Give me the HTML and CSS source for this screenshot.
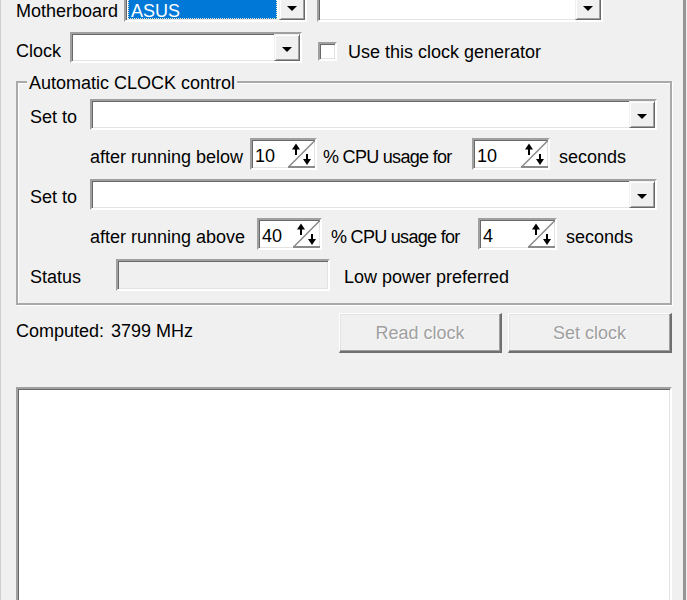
FILE: index.html
```html
<!DOCTYPE html>
<html>
<head>
<meta charset="utf-8">
<title>Clock</title>
<link rel="stylesheet" href="styles.css">
</head>
<body>
<div class="window">
  <div class="row row-mb">
    <span class="lbl lbl-mb">Motherboard</span>
    <div class="combo sunken combo-mb">
      <div class="combo-field field-sel"><span class="sel">ASUS</span></div>
      <div class="drop"><span class="tri"></span></div>
    </div>
    <div class="combo sunken combo-mb2">
      <div class="combo-field"></div>
      <div class="drop"><span class="tri"></span></div>
    </div>
  </div>

  <div class="row row-clock">
    <span class="lbl lbl-clock">Clock</span>
    <div class="combo sunken combo-clock">
      <div class="combo-field"></div>
      <div class="drop"><span class="tri"></span></div>
    </div>
    <span class="check sunken"></span>
    <span class="lbl lbl-check">Use this clock generator</span>
  </div>

  <div class="group">
    <div class="legend">Automatic CLOCK control</div>

    <div class="row row-set1">
      <span class="lbl lbl-set">Set to</span>
      <div class="combo sunken combo-set">
        <div class="combo-field"></div>
        <div class="drop"><span class="tri"></span></div>
      </div>
    </div>

    <div class="row row-spin1">
      <span class="lbl lbl-t lbl-below">after running below</span>
      <div class="edit sunken edit-a1">
        <span class="val">10</span>
        <svg class="spin" viewBox="0 0 27 28" width="27" height="28"><path d="M0 27.5 L27 0.5" stroke="#8a8a8a" stroke-width="1.5" fill="none"/><path d="M0 27 H27" stroke="#8a8a8a" stroke-width="2"/><path d="M8 7 V15" stroke="#000" stroke-width="2"/><path d="M4 9.5 L8 3.5 L12 9.5 Z" fill="#000"/><path d="M19 14 V21" stroke="#000" stroke-width="2"/><path d="M15 19 L19 25 L23 19 Z" fill="#000"/></svg>
      </div>
      <span class="lbl lbl-t lbl-cpu lbl-cpu1">% CPU usage for</span>
      <div class="edit sunken edit-b1">
        <span class="val">10</span>
        <svg class="spin" viewBox="0 0 27 28" width="27" height="28"><path d="M0 27.5 L27 0.5" stroke="#8a8a8a" stroke-width="1.5" fill="none"/><path d="M0 27 H27" stroke="#8a8a8a" stroke-width="2"/><path d="M8 7 V15" stroke="#000" stroke-width="2"/><path d="M4 9.5 L8 3.5 L12 9.5 Z" fill="#000"/><path d="M19 14 V21" stroke="#000" stroke-width="2"/><path d="M15 19 L19 25 L23 19 Z" fill="#000"/></svg>
      </div>
      <span class="lbl lbl-t lbl-sec">seconds</span>
    </div>

    <div class="row row-set2">
      <span class="lbl lbl-set">Set to</span>
      <div class="combo sunken combo-set">
        <div class="combo-field"></div>
        <div class="drop"><span class="tri"></span></div>
      </div>
    </div>

    <div class="row row-spin2">
      <span class="lbl lbl-t lbl-above">after running above</span>
      <div class="edit sunken edit-a2">
        <span class="val">40</span>
        <svg class="spin" viewBox="0 0 27 28" width="27" height="28"><path d="M0 27.5 L27 0.5" stroke="#8a8a8a" stroke-width="1.5" fill="none"/><path d="M0 27 H27" stroke="#8a8a8a" stroke-width="2"/><path d="M8 7 V15" stroke="#000" stroke-width="2"/><path d="M4 9.5 L8 3.5 L12 9.5 Z" fill="#000"/><path d="M19 14 V21" stroke="#000" stroke-width="2"/><path d="M15 19 L19 25 L23 19 Z" fill="#000"/></svg>
      </div>
      <span class="lbl lbl-t lbl-cpu lbl-cpu2">% CPU usage for</span>
      <div class="edit sunken edit-b2">
        <span class="val">4</span>
        <svg class="spin" viewBox="0 0 27 28" width="27" height="28"><path d="M0 27.5 L27 0.5" stroke="#8a8a8a" stroke-width="1.5" fill="none"/><path d="M0 27 H27" stroke="#8a8a8a" stroke-width="2"/><path d="M8 7 V15" stroke="#000" stroke-width="2"/><path d="M4 9.5 L8 3.5 L12 9.5 Z" fill="#000"/><path d="M19 14 V21" stroke="#000" stroke-width="2"/><path d="M15 19 L19 25 L23 19 Z" fill="#000"/></svg>
      </div>
      <span class="lbl lbl-t lbl-sec">seconds</span>
    </div>

    <div class="row row-status">
      <span class="lbl lbl-status">Status</span>
      <div class="status-box sunken"></div>
      <span class="lbl lbl-pref">Low power preferred</span>
    </div>
  </div>

  <div class="row row-bottom">
    <span class="lbl lbl-computed">Computed:<span class="mhz">3799 MHz</span></span>
    <button class="btn btn-read" disabled>Read clock</button>
    <button class="btn btn-set" disabled>Set clock</button>
  </div>

  <div class="log sunken"></div>
</div>
</body>
</html>
```

FILE: styles.css
```css
html, body {
  margin: 0;
  padding: 0;
  background: #f0f0f0;
  overflow: hidden;
}

body {
  font-family: "Liberation Sans", Arial, sans-serif;
  font-size: 18px;
  line-height: 20px;
  color: #000;
}

.window {
  width: 686px;
  height: 600px;
  box-sizing: border-box;
  border-left: 1px solid #cfcfcf;
  border-right: 3px solid #959595;
  padding: 0 11px 0 15px;
  display: flex;
  flex-direction: column;
  overflow: hidden;
}

.row {
  display: flex;
  align-items: flex-start;
  flex-shrink: 0;
}

.lbl {
  line-height: 20px;
  white-space: nowrap;
  flex-shrink: 0;
}

/* 3D sunken edge */
.sunken {
  box-sizing: border-box;
  border: 2px solid;
  border-color: #a0a0a0 #ffffff #ffffff #a0a0a0;
  box-shadow: inset 1px 1px 0 #696969, inset -1px -1px 0 #e3e3e3;
}

/* Combo boxes */
.combo {
  display: flex;
  height: 31px;
  background: #fff;
  flex-shrink: 0;
}

.combo-field {
  flex: 1;
  display: flex;
}

.drop {
  width: 26px;
  box-sizing: border-box;
  background: #f0f0f0;
  border: 1px solid;
  border-color: #f0f0f0 #696969 #696969 #f0f0f0;
  box-shadow: inset 1px 1px 0 #fff, inset -1px -1px 0 #a0a0a0;
  display: flex;
  align-items: center;
  justify-content: center;
}

.tri {
  width: 0;
  height: 0;
  margin-top: 3px;
  border-left: 5px solid transparent;
  border-right: 5px solid transparent;
  border-top: 5px solid #000;
}

/* Row: Motherboard */
.row-mb {
  margin-top: -9px;
}

.lbl-mb {
  width: 108px;
  margin-top: 10px;
}

.combo-mb {
  width: 183px;
}

.field-sel {
  padding: 1px 2px 1px 2px;
}

.sel {
  flex: 1;
  display: block;
  background: #0078d7;
  color: #fff;
  padding: 7px 0 0 3px;
  outline: 1px dotted #e8e8c8;
  outline-offset: -1px;
}

.combo-mb2 {
  width: 286px;
  margin-left: 10px;
}

/* Row: Clock */
.row-clock {
  margin-top: 10px;
}

.lbl-clock {
  width: 54px;
  margin-top: 9px;
}

.combo-clock {
  width: 232px;
}

.check {
  width: 19px;
  height: 19px;
  background: #fff;
  margin: 10px 0 0 16px;
  flex-shrink: 0;
}

.lbl-check {
  margin: 10px 0 0 11px;
}

/* Group box */
.group {
  margin-top: 18px;
  border: 2px solid #a9a9a9;
  box-shadow: inset 1px 1px 0 #fff, 1px 1px 0 #fff;
  padding: 0 13px 12px 12px;
  display: flex;
  flex-direction: column;
  flex-shrink: 0;
}

.legend {
  align-self: flex-start;
  margin: -10px 0 0 -3px;
  padding: 0 2px;
  background: #f0f0f0;
  line-height: 20px;
  white-space: nowrap;
}

.row-set1 {
  margin-top: 6px;
}

.row-set2 {
  margin-top: 9px;
}

.lbl-set {
  width: 60px;
  margin-top: 8px;
}

.combo-set {
  flex: 1;
}

.row-spin1,
.row-spin2 {
  margin-top: 8px;
  padding-left: 60px;
}

.lbl-t {
  margin-top: 9px;
}

.lbl-below {
  width: 160px;
}

.lbl-above {
  width: 167px;
}

/* Spin edits */
.edit {
  display: flex;
  height: 32px;
  background: #fff;
  flex-shrink: 0;
}

.val {
  flex: 1;
  padding: 6px 0 0 3px;
  line-height: 20px;
}

.spin {
  display: block;
  flex-shrink: 0;
}

.edit-a1 {
  width: 67px;
}

.edit-b1 {
  width: 78px;
}

.edit-a2 {
  width: 65px;
}

.edit-b2 {
  width: 79px;
}

.lbl-cpu {
  letter-spacing: -0.7px;
}

.lbl-cpu1 {
  width: 149px;
  margin-left: 6px;
}

.lbl-cpu2 {
  width: 147px;
  margin-left: 9px;
}

.lbl-sec {
  margin-left: 9px;
}

/* Status */
.row-status {
  margin-top: 9px;
}

.lbl-status {
  width: 86px;
  margin-top: 8px;
}

.status-box {
  width: 214px;
  height: 32px;
  background: #f0f0f0;
  flex-shrink: 0;
}

.lbl-pref {
  margin: 8px 0 0 14px;
}

/* Bottom row */
.row-bottom {
  margin-top: 8px;
  gap: 6px;
}

.lbl-computed {
  flex: 1;
  margin-top: 8px;
}

.mhz {
  margin-left: 7px;
}

.btn {
  height: 40px;
  box-sizing: border-box;
  margin: 0;
  padding: 0;
  font: inherit;
  line-height: 20px;
  background: #f0f0f0;
  color: #a0a0a0;
  text-shadow: 1px 1px 0 #fff;
  border-style: solid;
  border-width: 1px 2px 2px 1px;
  border-color: #ffffff #6f6f6f #6f6f6f #ffffff;
  box-shadow: inset -1px -1px 0 #a0a0a0, inset 1px 1px 0 #e3e3e3;
  -webkit-appearance: none;
  appearance: none;
}

.btn-read {
  width: 163px;
}

.btn-set {
  width: 164px;
}

/* Log area */
.log {
  margin-top: 34px;
  height: 260px;
  background: #fff;
  flex-shrink: 0;
}
```
